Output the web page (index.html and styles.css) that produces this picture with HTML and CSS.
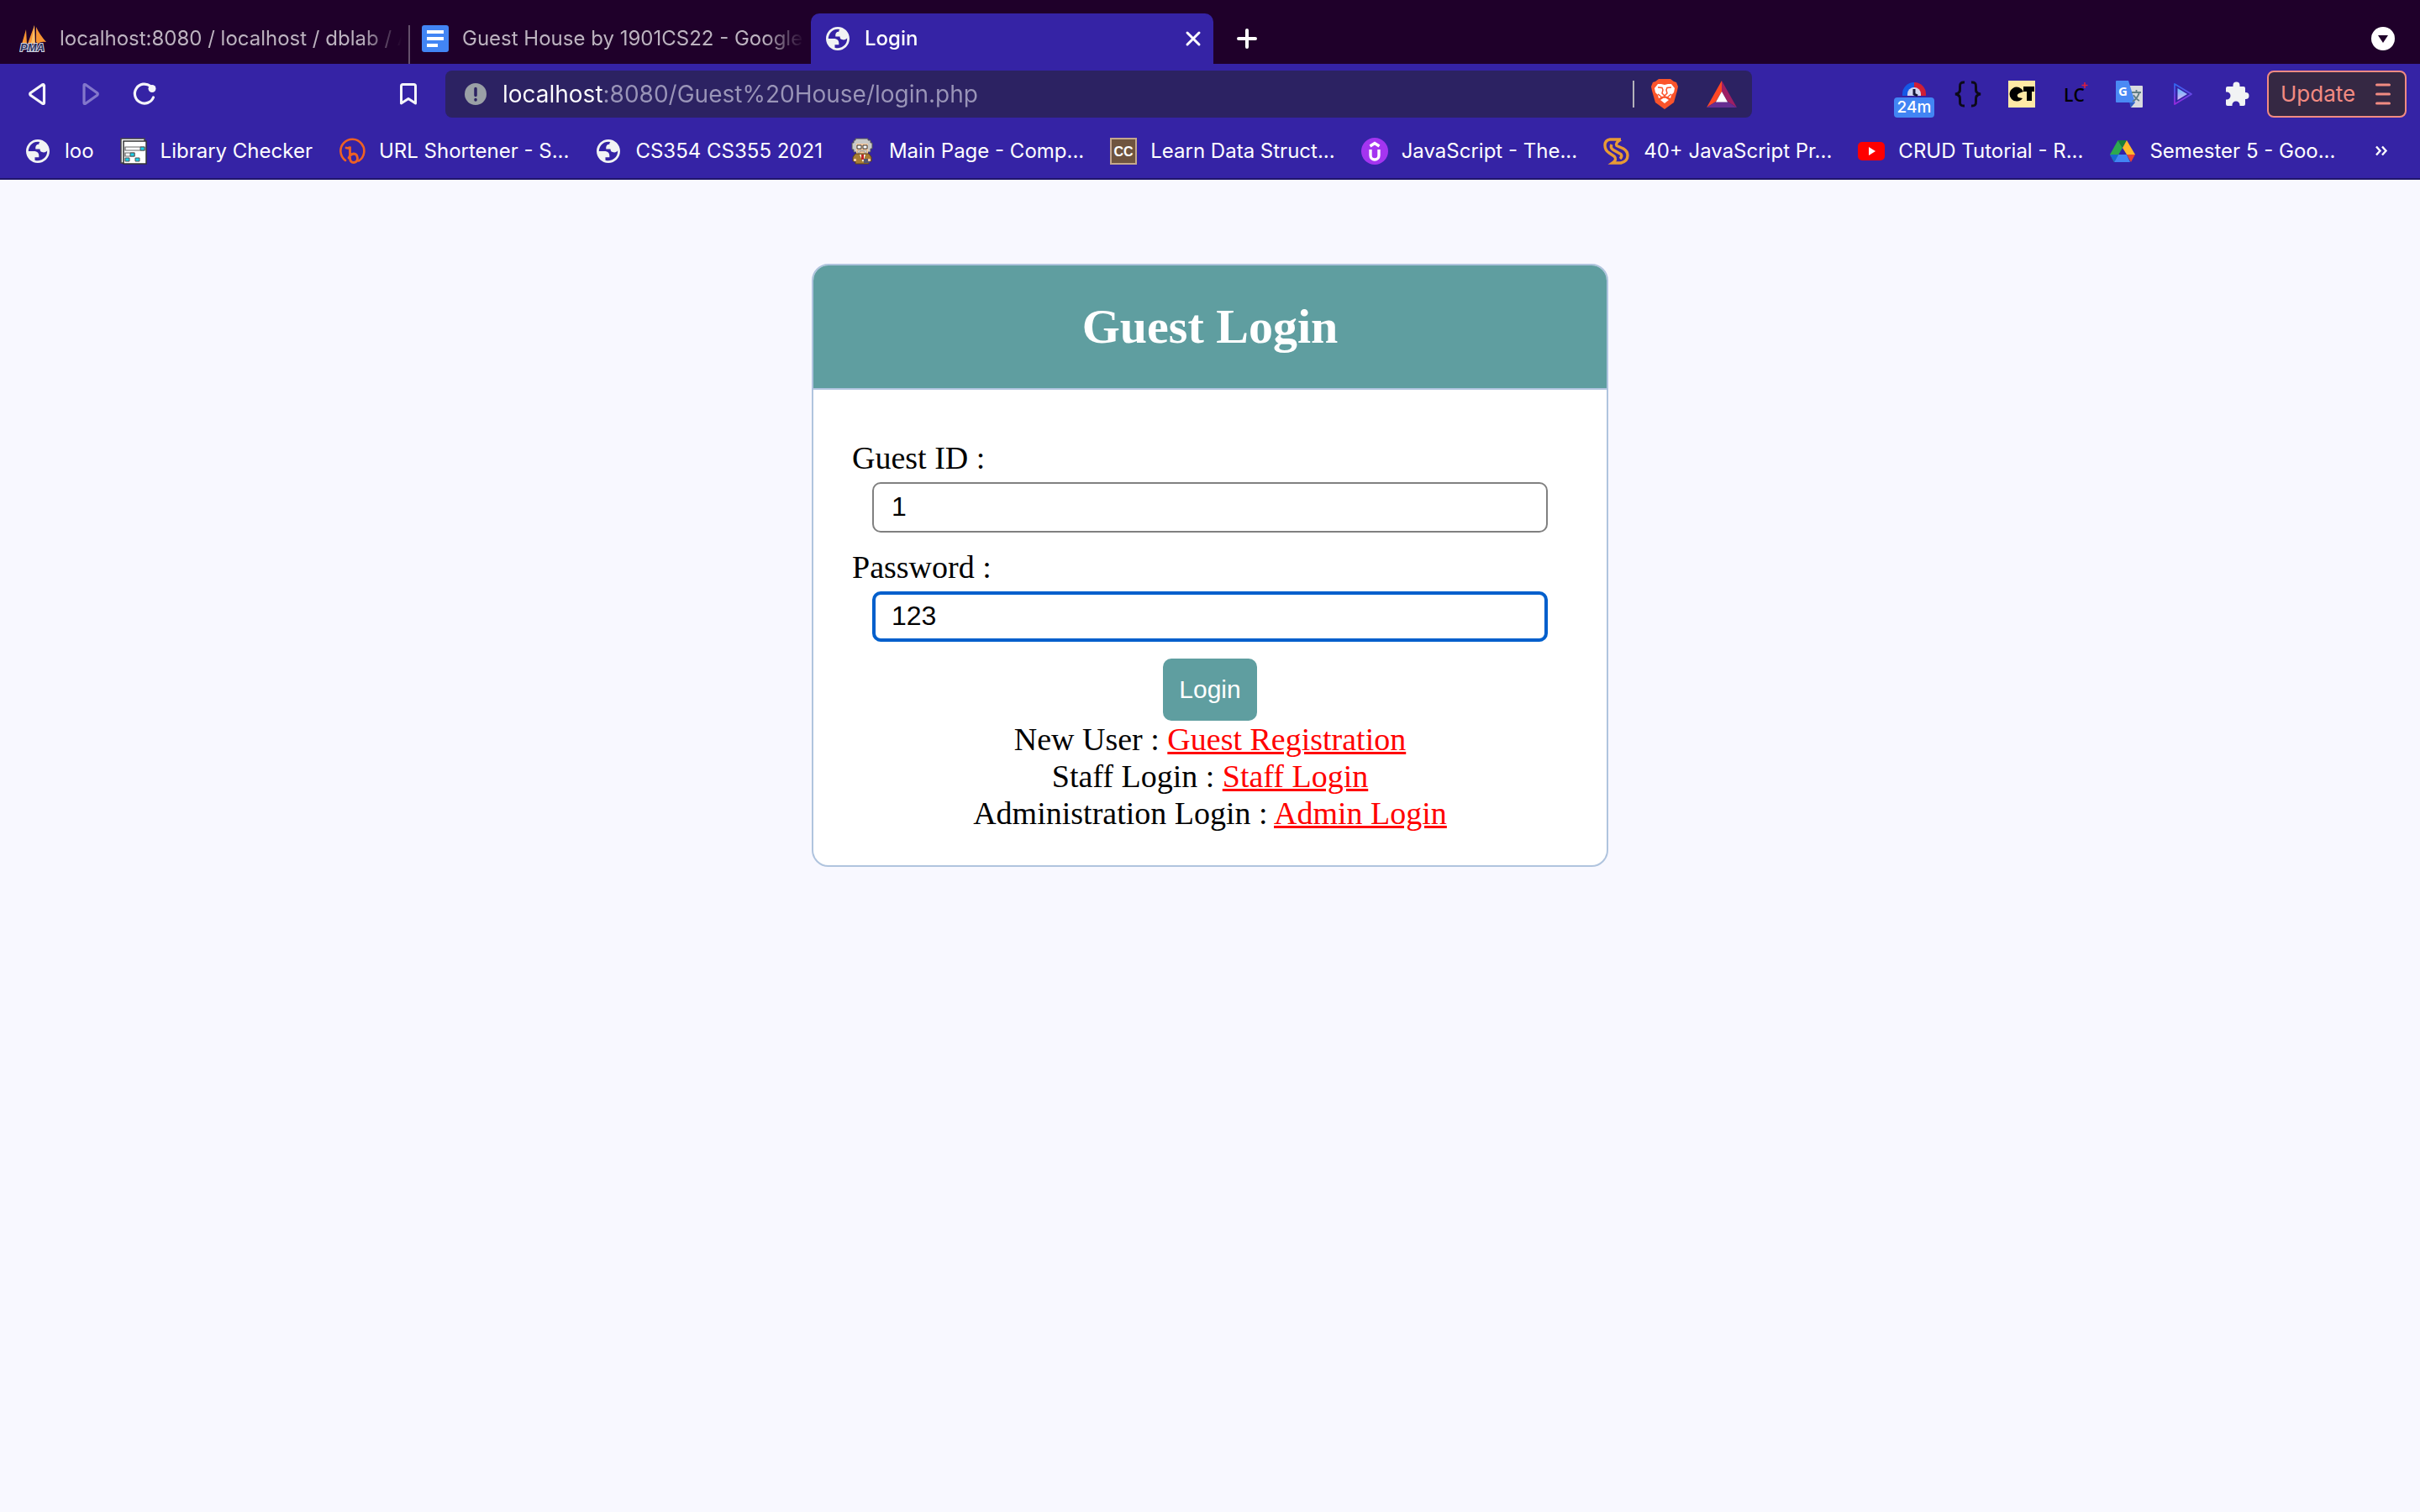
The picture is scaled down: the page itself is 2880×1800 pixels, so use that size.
FILE: index.html
```html
<!DOCTYPE html>
<html lang="en">
<head>
<meta charset="utf-8">
<meta name="viewport" content="width=device-width, initial-scale=1">
<title>Login</title>
<link rel="stylesheet" href="styles.css">
</head>
<body>
<svg class="sprite" aria-hidden="true">
  <symbol id="globe" viewBox="0.57 0.57 22.86 22.86">
    <path fill-rule="evenodd" d="M12 2C6.480 2 2 6.480 2 12s4.480 10 10 10 10-4.480 10-10S17.520 2 12 2zM4 12h4.400c3.407.022 4.922 1.730 4.543 5.127H9.488v2.470a8.004 8.004 0 0 0 10.498-8.083C19.327 12.504 18.332 13 17 13c-2.137 0-3.206-.916-3.206-2.750h-3.748c-.274-2.728.683-4.092 2.870-4.092 0-.975.327-1.597.811-1.970A8.004 8.004 0 0 0 4 12z" fill="#f1f3f4"/>
  </symbol>
</svg>

<header class="browser">
  <div class="tabs" role="tablist">
    <button class="tab" role="tab" aria-selected="false">
      <svg class="icon" viewBox="0 0 32 32" aria-hidden="true"><path d="M3 22L8 5L9 22ZM10 22L18 0L19 22ZM20 20L20 2Q24 11 32 20Q25 19 23 22Z" fill="#f79433"/><path d="M18 0L14 22L18.500 22Z" fill="#fbc06a"/><text x="1" y="31" class="pma">PMA</text></svg>
      <span class="tab-title">localhost:8080 / localhost / dblab / A</span>
    </button>
    <button class="tab tab-divided" role="tab" aria-selected="false">
      <svg class="icon" viewBox="0 0 32 32" aria-hidden="true"><rect width="32" height="32" rx="3" fill="#4285f4"/><path d="M6 8h20M6 16h20M6 24h13" stroke="#fff" stroke-width="4"/></svg>
      <span class="tab-title">Guest House by 1901CS22 - Google D</span>
    </button>
    <button class="tab tab-active" role="tab" aria-selected="true">
      <svg class="icon" aria-hidden="true"><use href="#globe"/></svg>
      <span class="tab-title">Login</span>
      <svg class="icon" viewBox="0 0 32 32" aria-hidden="true"><path d="M9 9l14 14M23 9L9 23" stroke="#fff" stroke-width="3" stroke-linecap="round"/></svg>
    </button>
    <button class="tool new-tab" aria-label="New tab"><svg class="icon" viewBox="0 0 32 32"><path d="M16 6v20M6 16h20" stroke="#fff" stroke-width="4" stroke-linecap="round"/></svg></button>
    <button class="tool tab-search" aria-label="Search tabs"><svg class="icon" viewBox="0 0 32 32"><circle cx="16" cy="16" r="14" fill="#fff"/><path d="M10 12h12l-6 9z" fill="#1f002a"/></svg></button>
  </div>

  <div class="toolbar">
    <div class="nav">
      <button class="tool" aria-label="Back"><svg class="icon" viewBox="0 0 32 32"><path d="M23.500 5.500Q24.500 4 22.500 4.800L8.500 14.500Q7 16 8.500 17.500L22.500 27.200Q24.500 28 24.500 26.500V5.500Z" fill="none" stroke="#f4f4fa" stroke-width="3.200" stroke-linejoin="round"/></svg></button>
      <button class="tool" aria-label="Forward" disabled><svg class="icon" viewBox="0 0 32 32"><path d="M8 5.500Q8 4 9.800 4.800L23.500 14.500Q25 16 23.500 17.500L9.800 27.200Q8 28 8 26.500Z" fill="none" stroke="#8377cb" stroke-width="3.200" stroke-linejoin="round"/></svg></button>
      <button class="tool" aria-label="Reload"><svg class="icon" viewBox="0 0 32 32"><path d="M23 6.500A11.500 11.500 0 1 0 26.500 20" fill="none" stroke="#f4f4fa" stroke-width="3.200" stroke-linecap="round"/><circle cx="25" cy="9.500" r="4.500" fill="#f4f4fa"/></svg></button>
      <button class="tool bookmark-page" aria-label="Bookmark this page"><svg class="icon" viewBox="0 0 32 32"><path d="M7.500 27V6.500Q7.500 4.500 9.500 4.500H22.500Q24.500 4.500 24.500 6.500V27L16 21.500Z" fill="none" stroke="#f4f4fa" stroke-width="3" stroke-linejoin="round"/></svg></button>
    </div>
    <div class="address">
      <svg class="icon" viewBox="0 0 32 32" aria-hidden="true"><circle cx="16" cy="16" r="13" fill="#9aa0a6"/><path d="M16 9.500v8M16 22.500v.5" stroke="#2c2262" stroke-width="3.500" stroke-linecap="round"/></svg>
      <input class="address-input" type="text" aria-label="Address" value="localhost:8080/Guest%20House/login.php">
      <span class="address-rule"></span>
      <button class="tool" aria-label="Brave Shields"><svg class="icon icon-tall" viewBox="0 0 32 36"><path d="M9 0H23L27 3L30 4L32 9L31 14L27 28L16 36L5 28L1 14L0 9L2 4L5 3Z" fill="#fb542b"/><path d="M8 6H12L16 7L20 6H24L28 11L27 16L24 19L23 23L19 21L16 20L13 21L9 23L8 19L5 16L4 11Z" fill="#fff"/><path d="M16 22L21 25L16 29L11 25Z" fill="#fff"/><path d="M8 10L13 10.500L14 13L13 17L16 20L19 17L18 13L19 10.500L24 10M8 18L13 22M24 18L19 22M16 19V23" fill="none" stroke="#fb542b" stroke-width="1.500"/></svg></button>
      <button class="tool" aria-label="Brave Rewards"><svg class="icon icon-tall" viewBox="0 0 36 36"><path d="M18 2V15L11 27L0 34Z" fill="#ff4724"/><path d="M18 2L36 34L25 27L18 15Z" fill="#9e1f63"/><path d="M0 34L11 27H25L36 34Z" fill="#662d91"/><path d="M18 15L25 27.500H11Z" fill="#fff"/></svg></button>
    </div>
    <div class="extensions">
      <button class="tool tracker" aria-label="Time tracker"><svg class="icon" viewBox="0 0 32 32"><path d="M16 2A14 14 0 0 0 2 16V18H16Z" fill="#1558e6"/><path d="M16 2A14 14 0 0 1 30 16V18H16Z" fill="#d01f35"/><path d="M8 18V16a8 8 0 0 1 16 0V18Z" fill="#d4d7f2"/><path d="M16 10v6l4 2" fill="none" stroke="#15163a" stroke-width="3"/></svg><span class="badge">24m</span></button>
      <button class="tool" aria-label="JSON viewer"><svg class="icon" viewBox="0 0 32 32"><path d="M12 2Q6 1.500 6.500 7V10Q7 15 1 16Q7 17 6.500 22V25Q6 30.500 12 30M20 2Q26 1.500 25.500 7V10Q25 15 31 16Q25 17 25.500 22V25Q26 30.500 20 30" fill="none" stroke="#0c0a18" stroke-width="3"/></svg></button>
      <button class="tool" aria-label="CT extension"><svg class="icon" viewBox="0 0 32 32"><rect width="32" height="32" fill="#ffe9a6"/><path d="M18 13A8.500 8.500 0 1 0 17 21L12 20Q9 17 13 15Z" fill="#000"/><path d="M18 7h13v6h-3v11h-6v-11h-4z" fill="#000"/></svg></button>
      <button class="tool" aria-label="LC extension"><svg class="icon" viewBox="0 0 32 32"><text x="2" y="25" class="lc">LC</text><path d="M27 2v7M23.500 5.500h7" stroke="#e01e3c" stroke-width="1.500"/></svg></button>
      <button class="tool" aria-label="Translate"><svg class="icon" viewBox="0 0 32 32"><path d="M14 6H31Q32 6 32 7V31Q32 32 31 32H18Z" fill="#d9dbde"/><path d="M16 26H23L18 32Z" fill="#2f5fc4"/><path d="M1 0H15L23 26H1Q0 26 0 25V1Q0 0 1 0Z" fill="#4a8af4"/><path d="M19 14H30M24.500 11V14M28 14Q26 21 20 25M21 17Q24 22 28 24" fill="none" stroke="#607d84" stroke-width="1.800"/><text x="3" y="18" class="g">G</text></svg></button>
      <button class="tool" aria-label="Media player"><svg class="icon" viewBox="0 0 32 32"><defs><linearGradient id="edge" x2="0" y2="1"><stop stop-color="#3068f0"/><stop offset="1" stop-color="#9a28dc"/></linearGradient><linearGradient id="core" x2="0" y2="1"><stop stop-color="#62b8ff"/><stop offset="1" stop-color="#d9b4f4"/></linearGradient></defs><path d="M6 4L26 16L6 28Z" fill="none" stroke="url(#edge)" stroke-width="1.800" stroke-linejoin="round"/><path d="M9.500 9L21 16L9.500 23Z" fill="url(#core)"/></svg></button>
      <button class="tool" aria-label="Extensions"><svg class="icon" viewBox="0 0 32 32"><path d="M5 7H11.500V5.500a4 4 0 0 1 8 0V7H24Q26 7 26 9V14H26.500a4 4 0 0 1 0 8H26V28Q26 30 24 30H19.500V29a4.500 4.500 0 0 0-9 0V30H5Q3 30 3 28V22.500H4a4.500 4.500 0 0 0 0-9H3V9Q3 7 5 7Z" fill="#f1f3f4"/></svg></button>
      <button class="update">Update<svg class="menu" viewBox="0 0 18 32" aria-hidden="true"><path d="M1.500 5h15M1.500 16h15M1.500 27h15" stroke="#f28b82" stroke-width="3" stroke-linecap="round"/></svg></button>
    </div>
  </div>

  <nav class="bookmarks" aria-label="Bookmarks">
    <a class="bookmark" href="#"><svg class="icon" aria-hidden="true"><use href="#globe"/></svg><span class="label">loo</span></a>
    <a class="bookmark" href="#"><svg class="icon" viewBox="0 0 32 32" aria-hidden="true"><path d="M1 1H29V30H1Z" fill="#fff" stroke="#444" stroke-width="1.500"/><path d="M4 4H31V31H4Z" fill="#fff" stroke="#333" stroke-width="1.500"/><path d="M6 11H29V15H6ZM6 18H17V22H6Z" fill="#fff" stroke="#666" stroke-width="1.200"/><path d="M24 11H29V15H24ZM12 18H17V22H12ZM6 24H11V28H6ZM18 24H23V28H18Z" fill="#19d3ec" stroke="#555" stroke-width="1"/></svg><span class="label">Library Checker</span></a>
    <a class="bookmark" href="#"><svg class="icon" viewBox="0 0 32 32" aria-hidden="true"><path d="M8 27A14 14 0 1 1 24 27.500" fill="none" stroke="#ee6123" stroke-width="2.600" stroke-linecap="round"/><path d="M9 12Q13 13 13.500 10.500V24Q13.500 29.500 18 29.500Q22.500 29 22.500 24.500Q22 19 18 19Q14 19.500 12 24" fill="none" stroke="#ee6123" stroke-width="2.800" stroke-linecap="round"/></svg><span class="label">URL Shortener - S...</span></a>
    <a class="bookmark" href="#"><svg class="icon" aria-hidden="true"><use href="#globe"/></svg><span class="label">CS354 CS355 2021</span></a>
    <a class="bookmark" href="#"><svg class="icon" viewBox="0 0 32 32" aria-hidden="true"><path d="M8 1H23V3H26V6H28V13H26V17H6V14H4V6H6V3H8Z" fill="#c9c9c7" stroke="#555" stroke-width="1"/><path d="M9 7H23V19H20V21H12V19H9Z" fill="#f3c9a0"/><path d="M10 9H15V13H10ZM17 9H22V13H17Z" fill="#fff" stroke="#333" stroke-width="1"/><path d="M11 15H21V18H19V16H13V18H11Z" fill="#eee" stroke="#666" stroke-width=".5"/><path d="M8 19H24L27 23V28H24V31H8V28H5V23Z" fill="#a87c35" stroke="#5a421a" stroke-width="1"/><path d="M13 20H20L17 29Z" fill="#fff"/><path d="M15 20H18V26H15Z" fill="#c32626"/><path d="M18 25H25V30H18Z" fill="#515574"/><path d="M6 25H9V28H6ZM23 25H26V28H23Z" fill="#f3c9a0"/></svg><span class="label">Main Page - Comp...</span></a>
    <a class="bookmark" href="#"><svg class="icon" viewBox="0 0 32 32" aria-hidden="true"><rect x="1" y="1" width="30" height="30" fill="#6f543f" stroke="#c4a78c" stroke-width="2"/><text x="16" y="22" text-anchor="middle" class="cc">CC</text></svg><span class="label">Learn Data Struct...</span></a>
    <a class="bookmark" href="#"><svg class="icon" viewBox="0 0 32 32" aria-hidden="true"><circle cx="16" cy="16" r="16" fill="#a435f0"/><path d="M11 14V21a5 5 0 0 0 10 0V14M10.500 10L16 6.500L21.500 10" fill="none" stroke="#fff" stroke-width="3.400"/></svg><span class="label">JavaScript - The...</span></a>
    <a class="bookmark" href="#"><svg class="icon" viewBox="0 0 32 32" aria-hidden="true"><path d="M21 2H8Q2 3 2 9Q2 15 7 18L13 22Q17 26 11 30H21Q29 28 29 21Q29 16 24 13L16 9.500Q14 6 21 2M10 8Q8 12 12 14.500L21 19.500Q23 22 20 25" fill="none" stroke="#e89a35" stroke-width="3.400"/></svg><span class="label">40+ JavaScript Pr...</span></a>
    <a class="bookmark" href="#"><svg class="icon" viewBox="0 0 32 32" aria-hidden="true"><rect y="5" width="32" height="22" rx="5" fill="#f00"/><path d="M13 11L21 16L13 21Z" fill="#fff"/></svg><span class="label">CRUD Tutorial - R...</span></a>
    <a class="bookmark" href="#"><svg class="icon" viewBox="0 0 32 32" aria-hidden="true"><path d="M10.500 3L16 12L6 29L1 20Z" fill="#2da94f"/><path d="M10.500 3H21L16 12Z" fill="#188038"/><path d="M21 3L31 20H21L16 12Z" fill="#ffba2c"/><path d="M11 20H21L25 29H6Z" fill="#4285f4"/><path d="M1 20H11L6 29Z" fill="#1967d2"/><path d="M21 20H31L26 29Z" fill="#ea4335"/></svg><span class="label">Semester 5 - Goo...</span></a>
    <button class="tool more" aria-label="More bookmarks"><svg class="icon" viewBox="0 0 32 32"><path d="M10 10.500l4.500 5-4.500 5M17 10.500l4.500 5-4.500 5" fill="none" stroke="#fff" stroke-width="2.400"/></svg></button>
  </nav>
</header>

<main class="page">
  <section class="card">
    <h1 class="card-title">Guest Login</h1>
    <form class="card-body">
      <div class="field">
        <label class="field-label" for="guest-id">Guest ID :</label>
        <input class="field-input" id="guest-id" type="text" value="1">
      </div>
      <div class="field">
        <label class="field-label" for="password">Password :</label>
        <input class="field-input field-input-active" id="password" type="text" value="123">
      </div>
      <button class="login" type="button">Login</button>
      <p class="alt">New User : <a class="alt-link" href="#">Guest Registration</a></p>
      <p class="alt">Staff Login : <a class="alt-link" href="#">Staff Login</a></p>
      <p class="alt">Administration Login : <a class="alt-link" href="#">Admin Login</a></p>
    </form>
  </section>
</main>
</body>
</html>
```
FILE: styles.css
```css
* {
  box-sizing: border-box;
}

body {
  margin: 0;
  background: #f8f8ff;
  font-family: "Liberation Serif", serif;
}

button {
  border: 0;
  padding: 0;
  background: none;
  color: inherit;
  font: inherit;
}

.sprite {
  display: none;
}

/* Browser frame */
.browser {
  background: #3523a5;
  border-bottom: 2px solid #21166b;
  color: #fff;
  font: 24px/32px Inter, sans-serif;
}

.icon {
  display: block;
  flex: none;
  width: 32px;
  height: 32px;
}

.icon-tall {
  width: 36px;
  height: 36px;
}

.tool {
  position: relative;
  display: flex;
  flex: none;
  align-items: center;
  justify-content: center;
  width: 64px;
  height: 56px;
}

.tabs {
  display: flex;
  padding: 16px 12px 0 7px;
  background: #1f002a;
}

.tab {
  display: flex;
  flex: 0 1 479px;
  align-items: center;
  gap: 16px;
  min-width: 0;
  height: 60px;
  padding: 0 8px 0 16px;
  color: #bdb3c0;
  text-align: left;
}

.tab-title {
  flex: 1;
  overflow: hidden;
  white-space: nowrap;
  mask-image: linear-gradient(to left, transparent, #000 48px);
}

.tab-divided {
  background: linear-gradient(#65506c, #65506c) 0 100% / 2px 46px no-repeat;
}

.tab-active {
  border-radius: 10px 10px 0 0;
  background: #3523a5;
  color: #fff;
  font-weight: 500;
}

.new-tab {
  width: 80px;
  height: 60px;
}

.tab-search {
  height: 60px;
  margin-left: auto;
}

.toolbar {
  display: grid;
  grid-template-columns: 2fr 54% 3fr;
  align-items: center;
  height: 72px;
}

.nav {
  display: flex;
  padding: 0 12px;
}

.bookmark-page {
  margin-left: auto;
}

.address {
  display: flex;
  align-items: center;
  gap: 4px;
  height: 56px;
  padding: 0 4px 0 20px;
  border-radius: 8px;
  background: #2c2262;
}

.address-input {
  flex: 1;
  min-width: 0;
  height: 40px;
  margin-left: 12px;
  padding: 0;
  border: 0;
  outline: 0;
  background: linear-gradient(to right, #fff 120px, #9a95b8 120px);
  background-clip: text;
  color: transparent;
  font: 28px/40px Inter, sans-serif;
}

.address-rule {
  width: 2px;
  height: 32px;
  background: #b3b1ba;
}

.extensions {
  display: flex;
  justify-content: flex-end;
  padding-right: 16px;
}

.badge {
  position: absolute;
  right: 8px;
  bottom: 0;
  width: 48px;
  border-radius: 4px;
  background: #4285f4;
  font: 500 19px/24px Inter, sans-serif;
  text-align: center;
}

.update {
  display: flex;
  align-items: center;
  justify-content: space-between;
  width: 166px;
  height: 56px;
  margin-left: 4px;
  padding: 0 17px 0 14px;
  border: 2px solid #f28b82;
  border-radius: 8px;
  background: #352843;
  color: #f28b82;
  font-size: 26px;
}

.menu {
  width: 18px;
  height: 32px;
}

.bookmarks {
  display: flex;
  align-items: center;
  gap: 31px;
  height: 64px;
  padding: 0 26px 0 29px;
}

.bookmark {
  display: flex;
  flex: none;
  gap: 16px;
  color: inherit;
  text-decoration: none;
}

.more {
  width: 40px;
  margin-left: auto;
}

.pma {
  fill: #2b3360;
  stroke: #d5d6e4;
  stroke-width: 2px;
  paint-order: stroke;
  font: italic 700 13px "Liberation Sans", sans-serif;
}

.lc {
  fill: #000;
  font: 600 21px "Open Sans", sans-serif;
}

.g {
  fill: #fff;
  font: 700 15px "Open Sans", sans-serif;
}

.cc {
  fill: #fff;
  font: 700 16px "Liberation Sans", sans-serif;
}

/* Login page */
.page {
  padding: 100px 0;
}

.card {
  width: calc(30% + 84px);
  margin: 0 auto;
  overflow: hidden;
  border: 2px solid #b0c4de;
  border-radius: 20px;
  background: #fff;
}

.card-title {
  margin: 0;
  padding: 40px;
  border-bottom: 2px solid #b0c4de;
  background: #5f9ea0;
  color: #fff;
  font-size: 58px;
  line-height: 66px;
  text-align: center;
}

.card-body {
  padding: 60px 40px 40px;
  font-size: 38px;
  line-height: 44px;
}

.field {
  margin-bottom: 20px;
}

.field-label {
  display: block;
  margin: 0 6px 8px;
  line-height: 42px;
}

.field-input {
  display: block;
  width: calc(100% - 60px);
  height: 60px;
  margin: 0 30px;
  padding: 0 21px 2px;
  border: 2px solid #808080;
  border-radius: 10px;
  background: #fff;
  color: #000;
  font: 32px "Liberation Sans", sans-serif;
}

.field-input-active {
  padding: 0 19px 2px;
  border: 4px solid #005fcc;
}

.login {
  display: block;
  margin: 0 auto;
  padding: 20px 19px;
  border-radius: 10px;
  background: #5f9ea0;
  color: #fff;
  font: 30px/34px "Liberation Sans", sans-serif;
}

.alt {
  margin: 0;
  text-align: center;
}

.alt-link {
  color: #f00;
}
```
